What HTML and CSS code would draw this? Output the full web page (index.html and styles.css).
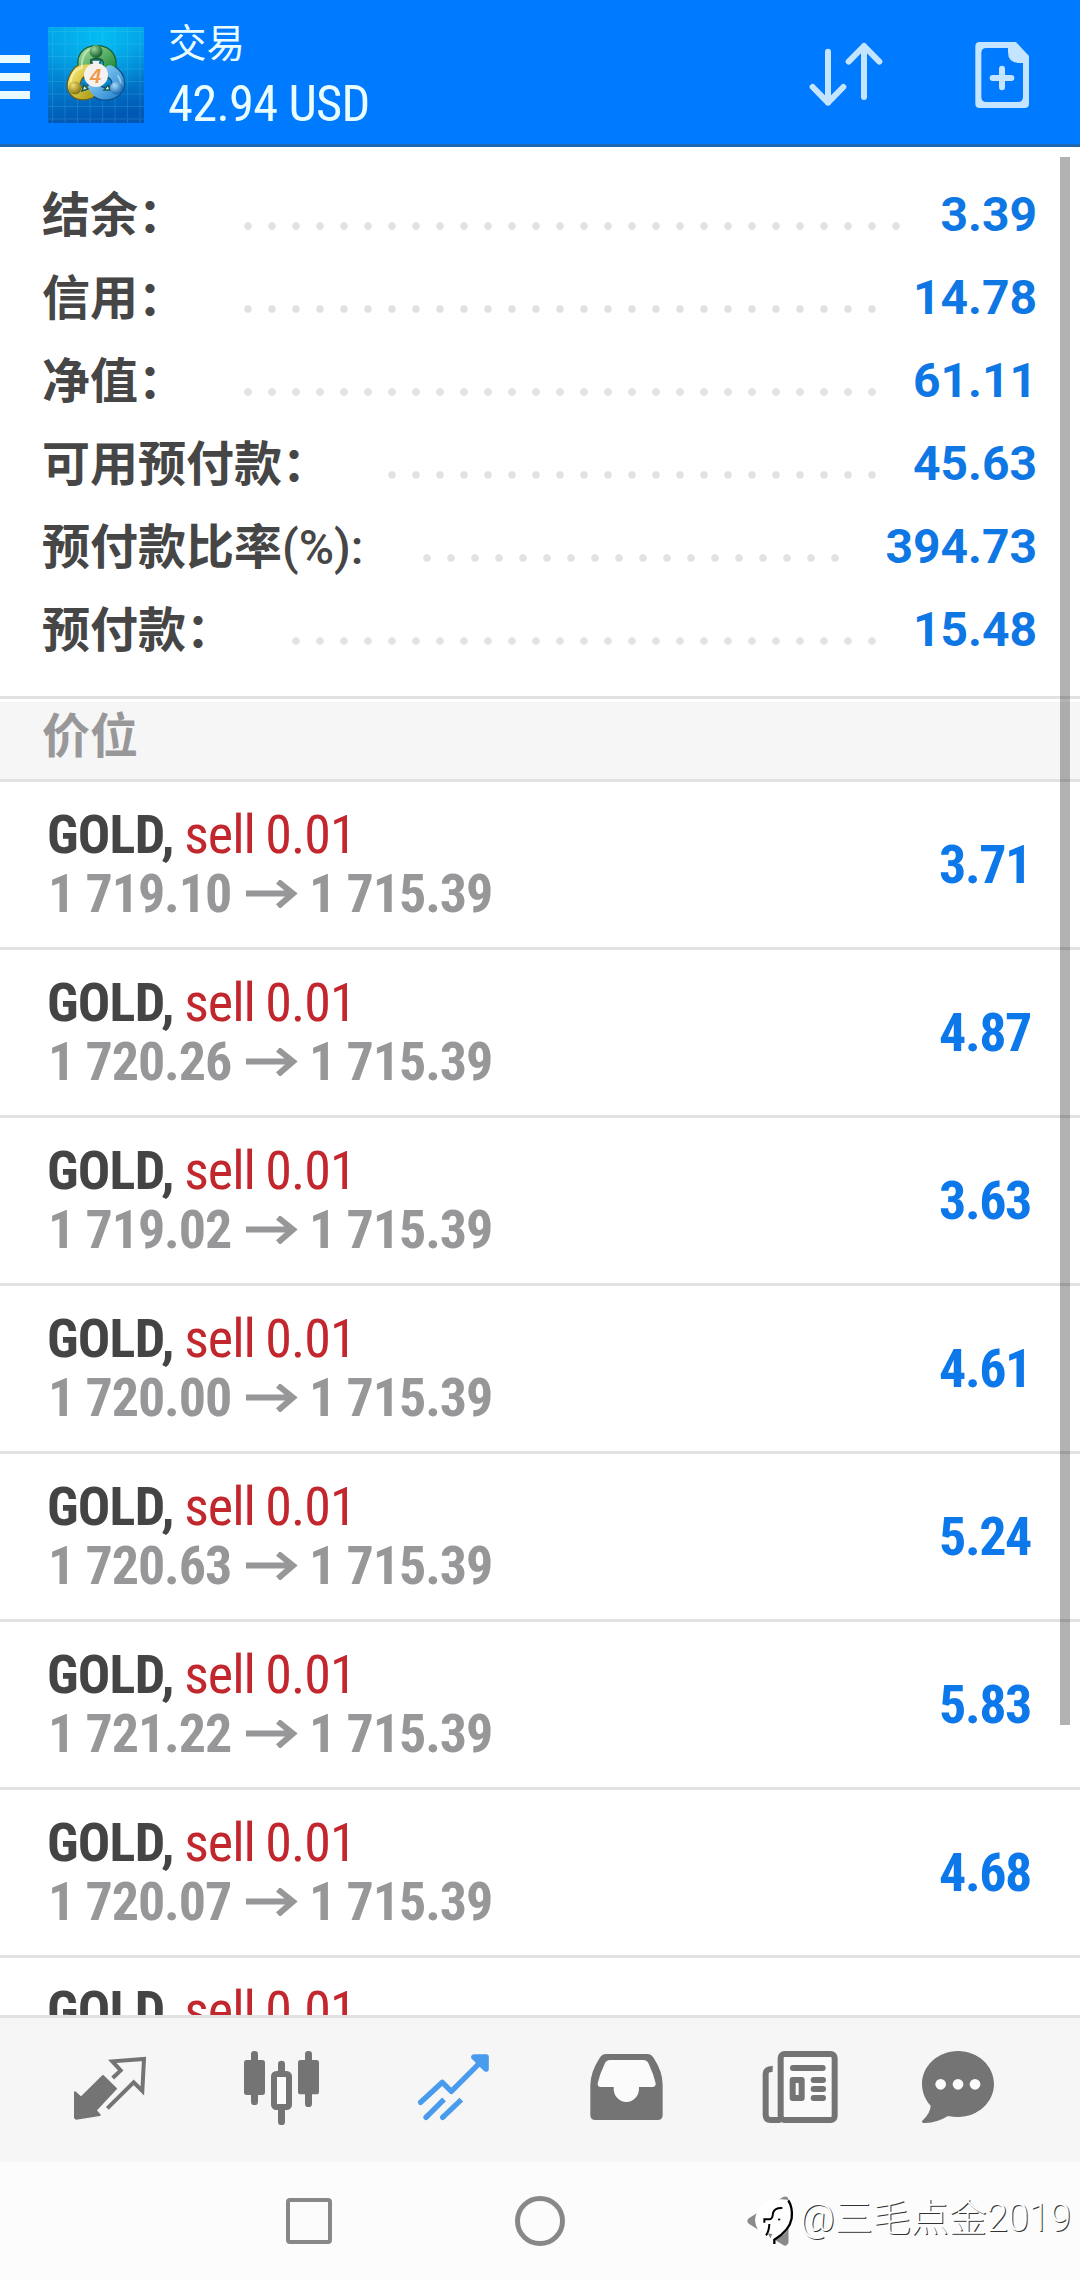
FILE: index.html
```html
<!DOCTYPE html>
<html lang="zh-CN">
<head>
<meta charset="utf-8">
<title>交易</title>
<link rel="stylesheet" href="styles.css">
</head>
<body>
<div class="app">
  <header class="header">
    <div class="menu"><i></i><i></i><i></i></div>
    <svg class="logo" viewBox="0 0 96 96">
      <defs>
        <linearGradient id="bg" x1="0" y1="0" x2="0.15" y2="1"><stop offset="0" stop-color="#03a6ea"/><stop offset=".3" stop-color="#0499e2"/><stop offset="1" stop-color="#0058b4"/></linearGradient>
        <radialGradient id="glow" cx=".55" cy=".12" r=".6"><stop offset="0" stop-color="#04c4f4" stop-opacity=".8"/><stop offset="1" stop-color="#04c4f4" stop-opacity="0"/></radialGradient>
        <pattern id="grid" x="4" y="4" width="12.5" height="12.5" patternUnits="userSpaceOnUse"><path d="M0 .5H12.5M.5 0V12.5" stroke="#5fd0f5" stroke-opacity=".2"/></pattern>
        <linearGradient id="gr" x1="0" y1="0" x2="1" y2="1"><stop offset="0" stop-color="#8fd08a"/><stop offset="1" stop-color="#1d8a3c"/></linearGradient>
        <linearGradient id="ye" x1="0" y1="0" x2="1" y2="1"><stop offset="0" stop-color="#f4e36a"/><stop offset="1" stop-color="#b5a420"/></linearGradient>
        <linearGradient id="bl" x1="0" y1="0" x2="1" y2="1"><stop offset="0" stop-color="#8ed0f6"/><stop offset="1" stop-color="#2f8bd2"/></linearGradient>
        <radialGradient id="gb" cx=".35" cy=".3" r=".7"><stop offset="0" stop-color="#9bd69b"/><stop offset="1" stop-color="#155f2c"/></radialGradient>
        <radialGradient id="yb" cx=".35" cy=".3" r=".7"><stop offset="0" stop-color="#f3df70"/><stop offset="1" stop-color="#857410"/></radialGradient>
        <radialGradient id="bb" cx=".35" cy=".3" r=".7"><stop offset="0" stop-color="#a9dcfa"/><stop offset="1" stop-color="#1768b4"/></radialGradient>
      </defs>
      <path fill="url(#bg)" d="M0 0H96V96H0z"/><path fill="url(#glow)" d="M0 0H96V96H0z"/><path fill="url(#grid)" d="M0 0H96V96H0z"/>
      <g fill="none" stroke-linecap="round">
        <path d="M38 44C33 31 39 25 49 25S65 33 60 45" stroke="#155c33" stroke-width="14"/>
        <path d="M42 65C28 70 23 61 27 52S34 43 42 43" stroke="#685e17" stroke-width="14"/>
        <path d="M62 44C73 50 73 63 62 66S48 63 46 60" stroke="#124f86" stroke-width="14"/>
        <path d="M38 44C33 31 39 25 49 25S65 33 60 45" stroke="url(#gr)" stroke-width="11.500"/>
        <path d="M42 65C28 70 23 61 27 52S34 43 42 43" stroke="url(#ye)" stroke-width="11.500"/>
        <path d="M62 44C73 50 73 63 62 66S48 63 46 60" stroke="url(#bl)" stroke-width="11.500"/>
        <path d="M34 40C33 28 40 22 45 21M23 54C23 47 29 41 34 41M70 49C74 54 73 60 71 63" stroke="#fff" stroke-opacity=".45" stroke-width="2"/>
        <path d="M43 33H53L50 40H46zM36 58L40 62L34 64zM60 58L56 63L62 63z" fill="#e8f4ee" stroke="#155c55" stroke-width="1.500"/>
      </g>
      <circle cx="48" cy="24.500" r="6.500" fill="url(#gb)"/><circle cx="27" cy="61" r="6.500" fill="url(#yb)"/><circle cx="68.500" cy="61" r="6.500" fill="url(#bb)"/>
      <circle cx="48" cy="48" r="12" fill="#f4f1ee"/>
      <text class="logo-num" x="47.500" y="55.500" text-anchor="middle">4</text>
    </svg>
    <div class="titles"><div class="title">交易</div><div class="total">42.94 USD</div></div>
    <svg class="actions" viewBox="0 0 960 432">
      <g fill="none" stroke="#c5e4ff" stroke-width="18" stroke-linecap="round" stroke-linejoin="round">
        <path d="M204 155V308M158 261L204 308L250 261M312 291V138M266 185L312 138L358 185"/>
        <path d="M698 234H754M726 206V262"/>
      </g>
      <path fill="#c5e4ff" fill-rule="evenodd" d="M659 126H768L807 168V311Q807 324 794 324H659Q646 324 646 311V139Q646 126 659 126zM679 144Q664 144 664 159V291Q664 306 679 306H774Q789 306 789 291V189H774Q744 186 744 157V144z"/>
    </svg>
  </header>

  <main class="content">
    <section class="summary">
      <div class="row short"><span class="label">结余：</span><span class="dots"></span><span class="value v4">3.39</span></div>
      <div class="row short"><span class="label">信用：</span><span class="dots"></span><span class="value">14.78</span></div>
      <div class="row short"><span class="label">净值：</span><span class="dots"></span><span class="value">61.11</span></div>
      <div class="row long"><span class="label">可用预付款：</span><span class="dots"></span><span class="value">45.63</span></div>
      <div class="row ratio"><span class="label">预付款比率<span class="unit">(%):</span></span><span class="dots"></span><span class="value v6">394.73</span></div>
      <div class="row mid"><span class="label">预付款：</span><span class="dots"></span><span class="value">15.48</span></div>
    </section>
    <h2 class="section">价位</h2>
    <section class="positions">
      <div class="pos"><div class="info"><div class="name">GOLD, <span class="side">sell 0.01</span></div><div class="prices"><span>1 719.10</span><svg class="arrow" viewBox="0 0 52 28"><path d="M0 13.500H46M32 1.500L47 13.500L32 26.500"/></svg><span>1 715.39</span></div></div><div class="profit">3.71</div></div>
      <div class="pos"><div class="info"><div class="name">GOLD, <span class="side">sell 0.01</span></div><div class="prices"><span>1 720.26</span><svg class="arrow" viewBox="0 0 52 28"><path d="M0 13.500H46M32 1.500L47 13.500L32 26.500"/></svg><span>1 715.39</span></div></div><div class="profit">4.87</div></div>
      <div class="pos"><div class="info"><div class="name">GOLD, <span class="side">sell 0.01</span></div><div class="prices"><span>1 719.02</span><svg class="arrow" viewBox="0 0 52 28"><path d="M0 13.500H46M32 1.500L47 13.500L32 26.500"/></svg><span>1 715.39</span></div></div><div class="profit">3.63</div></div>
      <div class="pos"><div class="info"><div class="name">GOLD, <span class="side">sell 0.01</span></div><div class="prices"><span>1 720.00</span><svg class="arrow" viewBox="0 0 52 28"><path d="M0 13.500H46M32 1.500L47 13.500L32 26.500"/></svg><span>1 715.39</span></div></div><div class="profit">4.61</div></div>
      <div class="pos"><div class="info"><div class="name">GOLD, <span class="side">sell 0.01</span></div><div class="prices"><span>1 720.63</span><svg class="arrow" viewBox="0 0 52 28"><path d="M0 13.500H46M32 1.500L47 13.500L32 26.500"/></svg><span>1 715.39</span></div></div><div class="profit">5.24</div></div>
      <div class="pos"><div class="info"><div class="name">GOLD, <span class="side">sell 0.01</span></div><div class="prices"><span>1 721.22</span><svg class="arrow" viewBox="0 0 52 28"><path d="M0 13.500H46M32 1.500L47 13.500L32 26.500"/></svg><span>1 715.39</span></div></div><div class="profit">5.83</div></div>
      <div class="pos"><div class="info"><div class="name">GOLD, <span class="side">sell 0.01</span></div><div class="prices"><span>1 720.07</span><svg class="arrow" viewBox="0 0 52 28"><path d="M0 13.500H46M32 1.500L47 13.500L32 26.500"/></svg><span>1 715.39</span></div></div><div class="profit">4.68</div></div>
      <div class="pos"><div class="info"><div class="name">GOLD, <span class="side">sell 0.01</span></div></div></div>
    </section>
    <div class="scrollbar"></div>
  </main>

  <nav class="tabs">
    <svg viewBox="72 54 516 432">
      <path fill="#747474" stroke="#747474" stroke-width="6" stroke-linejoin="round" d="M225 277L243 293L309 228L348 266L287 331L299 345L228 356L225 353z"/>
      <path fill="none" stroke="#747474" stroke-width="12" d="M338 234L362 211L337 184L432 177L427 273L401 247L322 325"/>
    </svg>
    <svg viewBox="588 54 516 432">
      <g fill="#747474"><rect x="732" y="180" width="63" height="105" rx="8"/><rect x="753" y="153" width="21" height="162" rx="10"/><rect x="894" y="180" width="63" height="103" rx="8"/><rect x="915" y="153" width="21" height="168" rx="10"/><rect x="834" y="182" width="21" height="50" rx="10"/><rect x="834" y="310" width="21" height="65" rx="10"/></g>
      <rect x="822" y="222" width="45" height="99" rx="7" fill="#fbfbfb" stroke="#747474" stroke-width="18"/>
    </svg>
    <svg viewBox="-36 54 516 432">
      <g fill="none" stroke="#499bee" stroke-width="16" stroke-linecap="round" stroke-linejoin="round"><path d="M122 307L187 247L214 274L316 172"/><path stroke-linecap="butt" d="M138 352L192 298M188 352L244 299"/><path d="M138 352L139 351M188 352L189 351"/><path stroke-width="17" d="M282 171H318V207z" fill="#499bee"/></g>
    </svg>
    <svg viewBox="480 54 516 432">
      <path fill="#747474" d="M678 162H802Q814 162 821 174Q848 215 848 255V345Q848 360 833 360H646Q631 360 631 345V255Q632 215 659 174Q666 162 678 162z"/>
      <path fill="#fbfbfb" d="M690 180H790Q801 180 806 191Q820 220 827 250Q828 261 817 261H777V266A38 40 0 0 1 701 266V261H662Q652 261 653 250Q660 220 674 191Q679 180 690 180z"/>
    </svg>
    <svg viewBox="-24 54 516 432">
      <rect x="182" y="162" width="162" height="198" rx="12" fill="#fafafa" stroke="#747474" stroke-width="18"/>
      <path fill="none" stroke="#747474" stroke-width="18" d="M158 207Q137 206 137 222V344Q137 360 152 360H182"/>
      <g stroke="#747474" stroke-width="18" stroke-linecap="round"><path d="M219 204H308M281 240H309M281 267H309M281 294H309"/></g>
      <rect x="218" y="240" width="27" height="54" fill="#fafafa" stroke="#747474" stroke-width="18" stroke-linejoin="round"/>
    </svg>
    <svg viewBox="492 54 516 432">
      <path fill="#747474" d="M714 153C774 153 822 198 822 252S774 351 714 351Q698 351 684 348Q652 368 615 369Q603 369 607 362Q632 338 632 317C616 300 606 277 606 252C606 198 654 153 714 153z"/>
      <g fill="#fbfbfb"><circle cx="662" cy="253" r="16"/><circle cx="714" cy="253" r="16"/><circle cx="765" cy="253" r="16"/></g>
    </svg>
  </nav>

  <div class="sysbar">
    <span class="recent"></span>
    <span class="home"></span>
    <svg class="back" viewBox="0 0 48 56"><path fill="none" stroke="#8a8a8a" stroke-width="7" stroke-linejoin="round" d="M40 7L6 28L40 49z"/></svg>
    <div class="watermark">
      <svg viewBox="0 0 120 165">
        <path fill="#fff" d="M50 20Q92 16 99 26Q108 50 104 80Q98 116 60 138Q40 142 22 128Q-4 112 -6 80Q0 30 50 20z"/>
        <g fill="none" stroke="#000" stroke-width="6"><path d="M76 45Q52 44 48 60Q47 79 38 79H22V89M37 93Q36 116 27 127"/><path stroke-width="7" d="M94 22Q108 45 104 76Q98 112 52 140V153"/></g>
        <path d="M63 77h7v5h-7z"/><path fill="#888" d="M32 120l14 4-6 12z"/>
      </svg>
      <span>@三毛点金2019</span>
    </div>
  </div>
</div>
</body>
</html>
```
FILE: styles.css
```css
* { box-sizing: border-box; }
body { margin: 0; background: #fff; font-family: Roboto, "Noto Sans CJK SC", sans-serif; }
.app { width: 1080px; height: 2280px; display: flex; flex-direction: column; overflow: hidden; }

.header { height: 147px; flex: none; display: flex; background: #007aff; border-bottom: 3px solid #1d68b0; }
.menu { width: 30px; margin-right: 18px; padding-top: 55px; display: flex; flex-direction: column; gap: 10px; }
.menu i { height: 8px; background: #e9fbff; }
.logo { width: 96px; height: 96px; margin-top: 27px; }
.logo-num { font: italic 700 20px "Liberation Sans", sans-serif; fill: #ef9a4a; }
.titles { margin-left: 24px; padding-top: 14px; color: #e9fdff; flex: 1; }
.title { font-size: 38.5px; line-height: 60px; height: 60px; }
.total { font-family: "Roboto Condensed", Roboto, sans-serif; font-size: 50.5px; line-height: 60px; letter-spacing: -.7px; white-space: nowrap; }
.actions { width: 320px; height: 144px; flex: none; }

.content { position: relative; height: 1868px; flex: none; overflow: hidden; }
.summary { height: 549px; padding: 26px 43px 0 42px; }
.row { height: 83px; display: flex; font-size: 48px; line-height: 83px; white-space: nowrap; }
.label { flex: none; font-weight: 700; color: #464646; line-height: 85px; }
.unit { font-weight: 500; }
.short .label { width: 194px; }
.mid .label { width: 242px; }
.long .label { width: 338px; }
.ratio .label { width: 373px; }
.dots { flex: 1; background: radial-gradient(circle, #e2e2e2 3.4px, transparent 4.2px) 0 41px / 24px 24px repeat-x; }
.value { flex: none; width: 153px; font-weight: 700; color: #0f77e4; text-align: right; }
.v4 { width: 129px; }
.v6 { width: 189px; }
.section { height: 86px; margin: 0; padding-left: 42px; background: #f6f6f6; border-top: 3px solid #e2e2e2; border-bottom: 3px solid #e2e2e2; box-shadow: inset 0 3px #fff; font-size: 48px; font-weight: 700; line-height: 76px; color: #98989a; }

.positions { font-family: "Roboto Condensed", Roboto, sans-serif; font-size: 54px; line-height: 59px; }
.pos { height: 168px; display: flex; justify-content: space-between; padding: 23px 49px 0 47px; border-bottom: 3px solid #e2e2e2; white-space: nowrap; }
.name { font-weight: 700; color: #444; letter-spacing: -.8px; word-spacing: -1px; }
.side { font-weight: 400; color: #c1272d; letter-spacing: -1px; }
.prices { display: flex; align-items: center; font-weight: 700; color: #97979a; letter-spacing: -1.1px; padding-left: 1px; }
.arrow { width: 52px; height: 28px; margin: 0 11px 0 15px; }
.arrow path { fill: none; stroke: #97979a; stroke-width: 6; }
.profit { font-weight: 700; color: #0d78ea; line-height: 120px; letter-spacing: -1.4px; }
.scrollbar { position: absolute; right: 10px; top: 10px; width: 10px; height: 1568px; background: rgba(0, 0, 0, .3); }

.tabs { height: 147px; flex: none; display: flex; padding: 0 24px; background: #f6f6f6; border-top: 3px solid #e2e2e2; }
.tabs svg { width: 172px; height: 144px; flex: none; }

.sysbar { position: relative; height: 118px; display: flex; align-items: center; background: #fcfcfc; padding-left: 286px; }
.recent { width: 46px; height: 46px; border: 4px solid #888; border-radius: 4px; }
.home { width: 50px; height: 50px; margin-left: 183px; border: 5px solid #888; border-radius: 50%; }
.back { width: 48px; height: 56px; margin-left: 180px; }
.watermark { position: absolute; left: 757px; top: 31px; display: flex; }
.watermark svg { width: 40px; height: 55px; margin-right: 3px; overflow: visible; }
.watermark span { font: 300 38px/50px Roboto, "Noto Sans CJK SC", sans-serif; color: #fff; text-shadow: 1px 1px 0 #333; white-space: nowrap; }
```
